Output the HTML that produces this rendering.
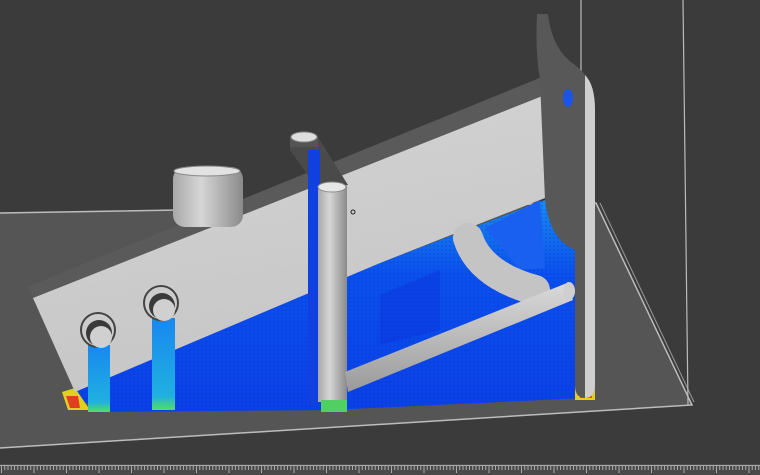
<!DOCTYPE html>
<html><head><style>
html,body{margin:0;padding:0;background:#3b3b3b;}
svg{display:block}
</style></head><body>
<svg width="760" height="475" viewBox="0 0 760 475" xmlns="http://www.w3.org/2000/svg">
<defs>
<linearGradient id="face" x1="0" y1="0" x2="0.3" y2="1">
<stop offset="0" stop-color="#d4d4d4"/><stop offset="1" stop-color="#c6c6c6"/></linearGradient>
<linearGradient id="tube" x1="0" y1="0" x2="1" y2="0">
<stop offset="0" stop-color="#a8a8a8"/><stop offset="0.4" stop-color="#d6d6d6"/><stop offset="1" stop-color="#8a8a8a"/></linearGradient>
<linearGradient id="bar" x1="0" y1="0" x2="0" y2="1">
<stop offset="0" stop-color="#dadada"/><stop offset="1" stop-color="#9a9a9a"/></linearGradient>
<linearGradient id="blue" x1="0" y1="0" x2="0" y2="1">
<stop offset="0" stop-color="#1a8cf0"/><stop offset="0.35" stop-color="#0a50ee"/><stop offset="1" stop-color="#0a40e8"/></linearGradient>
<linearGradient id="sup" x1="0" y1="0" x2="0" y2="1">
<stop offset="0" stop-color="#1888f0"/><stop offset="0.85" stop-color="#20b0e0"/><stop offset="1" stop-color="#50e060"/></linearGradient>
<pattern id="dots" width="4" height="4" patternUnits="userSpaceOnUse"><circle cx="2" cy="2" r="0.8" fill="#0830b0" opacity="0.5"/></pattern>
</defs>
<rect width="760" height="475" fill="#3b3b3b"/>
<!-- plate -->
<polygon points="0,213 596,203 692,405 0,448" fill="#555"/>
<polyline points="0,213 596,203 692,405 0,448" fill="none" stroke="#bdbdbd" stroke-width="1.5"/>
<line x1="600" y1="203" x2="694" y2="402" stroke="#999" stroke-width="1"/>
<line x1="581" y1="0" x2="581" y2="203" stroke="#bbb" stroke-width="1.2"/>
<line x1="683" y1="0" x2="688" y2="405" stroke="#bbb" stroke-width="1.2"/>
<!-- ruler -->
<rect x="0" y="464" width="760" height="11" fill="#4a4a4a"/>
<line x1="0" y1="465.5" x2="760" y2="465.5" stroke="#aaa" stroke-width="1"/>
<line x1="1" y1="468" x2="760" y2="468" stroke="#aaa" stroke-width="4" stroke-dasharray="1 2.25"/>
<line x1="1" y1="470" x2="760" y2="470" stroke="#aaa" stroke-width="6" stroke-dasharray="1 31.5"/>
<!-- blue support region -->
<polygon points="70,392 380,263 545,200 580,205 585,398 330,410 100,412" fill="url(#blue)"/>
<polygon points="70,392 380,263 545,200 580,205 585,398 330,410 100,412" fill="url(#dots)"/>
<polygon points="380,295 440,270 440,330 380,345" fill="#0a38e0" opacity="0.6"/>
<polygon points="62,392 75,388 90,410 68,410" fill="#e0d020"/>
<polygon points="66,396 78,396 80,408 70,408" fill="#e04020"/>
<rect x="575" y="380" width="20" height="20" fill="#e0d020"/>
<rect x="580" y="388" width="12" height="10" fill="#e05020"/>
<!-- beam top dark face -->
<polygon points="27,287 547,75 560,100 33,298" fill="#5a5a5a"/>
<!-- beam light face -->
<polygon points="33,298 545,95 545,198 380,263 75,392" fill="url(#face)"/>
<!-- curved arm -->
<polygon points="485,228 540,200 545,268 520,270" fill="#1a60f0"/>
<path d="M468,238 Q480,275 535,290" fill="none" stroke="#c4c4c4" stroke-width="30" stroke-linecap="round"/>
<!-- slot cap -->
<rect x="173" y="167" width="70" height="60" rx="12" fill="url(#tube)"/>
<ellipse cx="207" cy="171" rx="33" ry="5" fill="#e2e2e2" stroke="#888"/>
<!-- back post + bridge -->
<polygon points="290,137 318,137 348,185 318,190 290,150" fill="#4a4a4a"/>
<rect x="290" y="137" width="28" height="10" fill="#555"/>
<ellipse cx="304" cy="137" rx="13" ry="5" fill="#ddd" stroke="#888"/>
<rect x="308" y="150" width="12" height="255" fill="#1040e0"/>
<!-- vertical tube -->
<rect x="318" y="186" width="29" height="216" fill="url(#tube)"/>
<ellipse cx="332" cy="187" rx="14" ry="5" fill="#e6e6e6" stroke="#888"/>
<rect x="321" y="400" width="26" height="12" fill="#50d060"/>
<!-- horizontal bar -->
<polygon points="345,372 567,283 573,300 348,392" fill="url(#bar)"/>
<ellipse cx="569" cy="291" rx="6" ry="9" fill="#cfcfcf"/>
<!-- bracket -->
<path d="M537,14 L548,14 Q552,50 575,65 Q595,80 595,110 L595,385 Q595,398 585,398 Q575,398 575,385 L575,250 Q550,240 545,200 L540,80 Q535,50 537,14Z" fill="#585858"/>
<path d="M585,75 Q595,85 595,110 L595,385 Q595,398 585,398 L585,75Z" fill="#cfcfcf"/>
<ellipse cx="568" cy="98" rx="5" ry="9" fill="#1a55e8"/>
<!-- support columns -->
<rect x="88" y="345" width="22" height="67" fill="url(#sup)"/>
<rect x="152" y="318" width="23" height="92" fill="url(#sup)"/>
<!-- pins -->
<circle cx="98" cy="330" r="17" fill="#ccc" stroke="#444" stroke-width="2"/>
<circle cx="99" cy="333" r="13" fill="#3a3a3a"/>
<circle cx="101" cy="337" r="11" fill="#d0d0d0"/>
<circle cx="161" cy="303" r="17" fill="#ccc" stroke="#444" stroke-width="2"/>
<circle cx="162" cy="306" r="13" fill="#3a3a3a"/>
<circle cx="164" cy="310" r="11" fill="#d0d0d0"/>
<circle cx="353" cy="212" r="2" fill="none" stroke="#222"/>
</svg>
</body></html>
